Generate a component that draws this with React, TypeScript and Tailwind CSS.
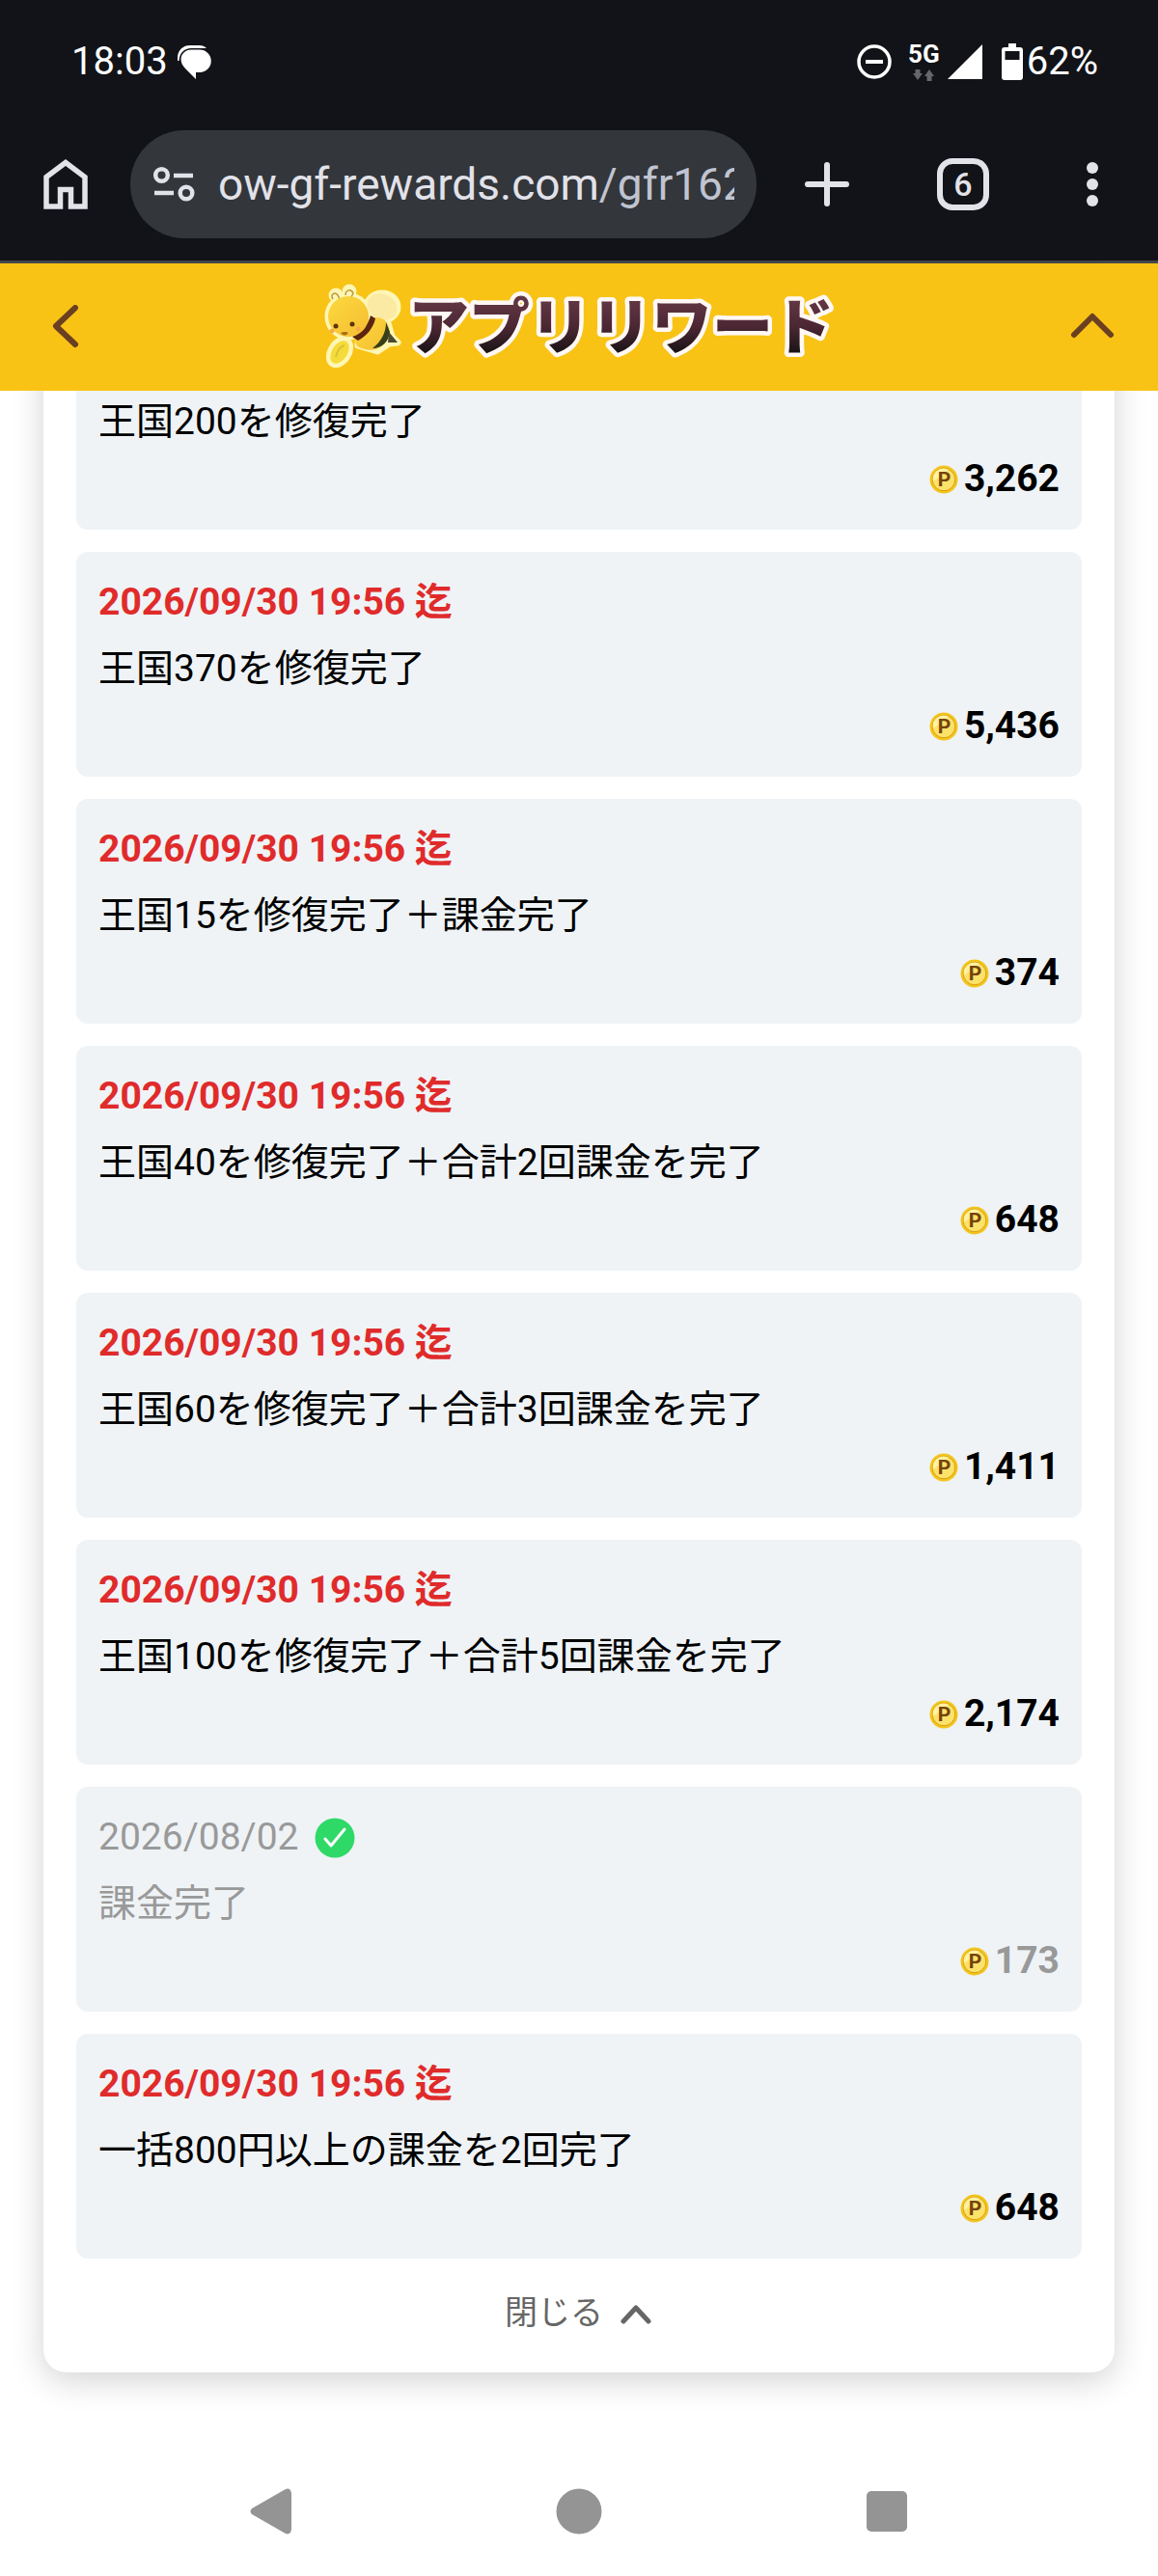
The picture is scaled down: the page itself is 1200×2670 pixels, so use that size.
import { ReactNode } from 'react';

type Reward = {
  date: string;
  title: string;
  points: string;
  done?: boolean;
};

const rewards: Reward[] = [
  { date: '2026/09/30 19:56 迄', title: '王国200を修復完了', points: '3,262' },
  { date: '2026/09/30 19:56 迄', title: '王国370を修復完了', points: '5,436' },
  { date: '2026/09/30 19:56 迄', title: '王国15を修復完了＋課金完了', points: '374' },
  { date: '2026/09/30 19:56 迄', title: '王国40を修復完了＋合計2回課金を完了', points: '648' },
  { date: '2026/09/30 19:56 迄', title: '王国60を修復完了＋合計3回課金を完了', points: '1,411' },
  { date: '2026/09/30 19:56 迄', title: '王国100を修復完了＋合計5回課金を完了', points: '2,174' },
  { date: '2026/08/02', title: '課金完了', points: '173', done: true },
  { date: '2026/09/30 19:56 迄', title: '一括800円以上の課金を2回完了', points: '648' },
];

function StatusBar() {
  return (
    <div className="flex h-32 items-center justify-between pl-[74px] pr-[62px] text-[40px] leading-none text-white">
      <div className="flex items-center gap-2.5">
        <span>18:03</span>
        <svg width="36" height="36" viewBox="0 0 36 36" fill="currentColor">
          <path d="M0 17C-1 8 4 1 13 1h9c4 0 6 1 8 3H14C7 4 2 9 1.500 17z" />
          <path d="M14 5.500h9a11.700 11.700 0 0 1 0 23.500h-4v7L8 25C-1 16 5 5.500 14 5.500z" />
        </svg>
      </div>
      <div className="flex items-center">
        <svg width="38" height="38" viewBox="0 0 38 38" fill="none" stroke="currentColor" strokeWidth="3.500">
          <circle cx="19" cy="19" r="16" />
          <path d="M10 19h18" strokeWidth="4" />
        </svg>
        <div className="ml-4 flex flex-col items-center gap-1">
          <span className="text-[26px] font-bold leading-6">5G</span>
          <svg width="24" height="12" viewBox="0 0 24 12" fill="#66676b">
            <path d="M3.500 0h5v4H11L6 11 1 4h2.500z" />
            <path d="M15.500 12h5V7H23l-5-7-5 7h2.500z" />
          </svg>
        </div>
        <svg className="ml-2" width="36" height="36" viewBox="0 0 36 36" fill="currentColor">
          <path d="M36 0v36H0z" />
        </svg>
        <svg className="ml-5" width="22" height="38" viewBox="0 0 22 38">
          <path d="M7 0h8v4h4a3 3 0 0 1 3 3v28a3 3 0 0 1-3 3H3a3 3 0 0 1-3-3V7a3 3 0 0 1 3-3h4z" fill="currentColor" />
          <path d="M3.500 8h15v9h-15z" fill="#111318" />
        </svg>
        <span className="ml-1">62%</span>
      </div>
    </div>
  );
}

function BrowserBar() {
  return (
    <div className="flex items-center border-b-[3px] border-[#44474c] pb-[23px] pl-11 pr-[51px] pt-[7px] text-[#e2e2e9]">
      <button type="button" aria-label="ホーム">
        <svg width="48" height="54" viewBox="0 0 48 54" fill="none" stroke="currentColor" strokeWidth="5.500">
          <path d="M4 19.500 24 4.500l20 15V50H29.500V32.500h-11V50H4z" />
        </svg>
      </button>
      <button
        type="button"
        className="ml-[43px] flex h-28 min-w-0 flex-1 items-center gap-6 rounded-full bg-[#33363b] pl-6 pr-[23px]"
      >
        <svg className="shrink-0" width="43" height="42" viewBox="0 0 43 42" fill="none" stroke="currentColor" strokeWidth="4.500">
          <circle cx="8.500" cy="11.500" r="6.300" />
          <path d="M21 12h20M1 30h20" />
          <circle cx="34" cy="30" r="6.300" />
        </svg>
        <span className="min-w-0 flex-1 overflow-hidden whitespace-nowrap text-left text-[46px] leading-[60px]">
          ow-gf-rewards.com<span className="text-[#c0c4d0]">/gfr162</span>
        </span>
      </button>
      <div className="ml-[49px] flex items-center gap-[90px]">
        <button type="button" aria-label="新しいタブ">
          <svg width="48" height="48" viewBox="0 0 48 48" fill="none" stroke="currentColor" strokeWidth="6" strokeLinecap="round">
            <path d="M24 4v40M4 24h40" />
          </svg>
        </button>
        <button
          type="button"
          className="flex size-[54px] items-center justify-center rounded-2xl border-[6px] border-[#e2e2e9] text-[34px] font-medium leading-none"
        >
          6
        </button>
        <button type="button" aria-label="メニュー">
          <svg width="34" height="48" viewBox="0 0 34 48" fill="currentColor">
            <circle cx="17" cy="7" r="6" />
            <circle cx="17" cy="24" r="6" />
            <circle cx="17" cy="41" r="6" />
          </svg>
        </button>
      </div>
    </div>
  );
}

function Logo() {
  return (
    <svg width="540" height="108" viewBox="-4 -8 540 108" role="img" aria-label="アプリリワード">
      <defs>
        <linearGradient id="logo-ink" x1="0" y1="0" x2="0" y2="1">
          <stop offset="0.2" stopColor="#663a46" />
          <stop offset="0.550" stopColor="#4c2734" />
          <stop offset="0.850" stopColor="#1a1416" />
        </linearGradient>
        <linearGradient id="bee-body" x1="0" y1="0" x2="1" y2="1">
          <stop offset="0" stopColor="#fcd93c" />
          <stop offset="1" stopColor="#f5bd33" />
        </linearGradient>
      </defs>

      {/* cream outline behind the bee */}
      <g fill="#fff6b4" stroke="#fff6b4" strokeWidth="7" strokeLinejoin="round">
        <circle cx="27" cy="35" r="21" />
        <ellipse cx="62" cy="25" rx="16" ry="14" />
        <path d="M38 52 54 34l14 8 4 14 6 6-9 1-12 8-20-6z" />
        <ellipse cx="18" cy="72" rx="9" ry="14" transform="rotate(32 18 72)" />
        <circle cx="14" cy="13" r="4" />
        <circle cx="28" cy="9" r="4" />
      </g>
      <path d="M11 17c-3-5 2-8 5-4l2 4M24 13c0-6 6-7 8-2l-2 4" fill="none" stroke="#b99b3c" strokeWidth="1.500" />
      <ellipse cx="62" cy="25" rx="16" ry="13" fill="#fbeaa4" transform="rotate(28 62 25)" />
      <path d="M32 56c6-12 16-21 26-20 10 2 14 12 10 20-4 12-16 18-32 10z" fill="url(#bee-body)" />
      <path d="M50 34c-2 9-9 18-19 22l6 4c9-5 16-13 18-23z" fill="#5b2510" />
      <path d="M66 41c0 11-5 20-14 27 10 0 17-7 18-17z" fill="#363f17" />
      <path d="m69 51 9 11-10 0z" fill="#4b4930" />
      <circle cx="27" cy="35" r="21" fill="url(#bee-body)" />
      <circle cx="14" cy="45" r="2.500" fill="#5d340b" />
      <circle cx="31" cy="43" r="2.500" fill="#5d340b" />
      <path d="M19 52q5-2 8 0-4 5-8 0z" fill="#a66c17" />
      <circle cx="10" cy="50" r="2.500" fill="#f8ac46" />
      <circle cx="37" cy="48" r="2.500" fill="#f8ac46" />
      <ellipse cx="18" cy="72" rx="8" ry="13" fill="#f5dc3a" transform="rotate(32 18 72)" />
      <path d="M14 77q2-10 9-12" fill="none" stroke="#dcc03a" strokeWidth="2" />

      <text
        x="89"
        y="68"
        fontSize="63"
        fontWeight="900"
        fill="url(#logo-ink)"
        stroke="#fff8f4"
        strokeWidth="9"
        strokeLinejoin="round"
        paintOrder="stroke"
        className="font-['Noto_Sans_CJK_JP',sans-serif]"
      >
        アプリリワード
      </text>
    </svg>
  );
}

function Header() {
  return (
    <header className="relative z-10 flex h-[132px] items-center justify-between bg-[#f8c314] px-[45px] text-[#6b3f22]">
      <button type="button" aria-label="戻る">
        <svg width="46" height="46" viewBox="0 0 46 46" fill="none" stroke="currentColor" strokeWidth="6" strokeLinecap="round" strokeLinejoin="round">
          <path d="M33 3 13 22l20 19" />
        </svg>
      </button>
      <Logo />
      <button type="button" aria-label="メニューを開く">
        <svg width="46" height="46" viewBox="0 0 46 46" fill="none" stroke="currentColor" strokeWidth="6" strokeLinecap="round" strokeLinejoin="round">
          <path d="m4 31 19-19 19 19" />
        </svg>
      </button>
    </header>
  );
}

function Coin() {
  return (
    <svg width="30" height="30" viewBox="0 0 30 30" aria-hidden="true">
      <circle cx="15" cy="15" r="14.500" fill="#f3c51d" />
      <circle cx="15" cy="15" r="11.800" fill="#fde269" stroke="#d79d10" strokeWidth="1" />
      <path d="M4 17A11 11 0 0 1 20 5z" fill="#fff3a0" />
      <text x="15.500" y="22" fontSize="21" fontWeight="700" textAnchor="middle" fill="#74430b">
        P
      </text>
    </svg>
  );
}

function RewardItem({ date, title, points, done }: Reward) {
  return (
    <li
      className={
        done
          ? 'rounded-xl bg-[#eff3f6] p-[23px] text-[#999999]'
          : 'rounded-xl bg-[#eff3f6] p-[23px] text-black'
      }
    >
      <div className="mb-2.5 flex items-center gap-4">
        <span className={done ? '' : 'font-bold text-[#e02b2b]'}>{date}</span>
        {done && (
          <svg width="42" height="42" viewBox="0 0 42 42" role="img" aria-label="完了">
            <circle cx="21" cy="21" r="20.500" fill="#2ed968" />
            <path d="m11 22 6 7 14-17" fill="none" stroke="white" strokeWidth="3" strokeLinecap="round" strokeLinejoin="round" />
          </svg>
        )}
      </div>
      <p>{title}</p>
      <div className="flex items-center justify-end gap-1.5 font-bold">
        <Coin />
        <span>{points}</span>
      </div>
    </li>
  );
}

function NavButton({ label, children }: { label: string; children: ReactNode }) {
  return (
    <button type="button" aria-label={label} className="flex justify-center">
      <svg width="48" height="48" viewBox="0 0 48 48" fill="currentColor">
        {children}
      </svg>
    </button>
  );
}

export default function App() {
  return (
    <div lang="ja" className="min-h-screen overflow-hidden bg-white font-[Roboto,'Noto_Sans_CJK_JP',sans-serif]">
      <div className="bg-[#111318]">
        <StatusBar />
        <BrowserBar />
      </div>
      <Header />

      {/* the list is scrolled, its first card sits partly under the header */}
      <main className="-mt-28 px-[45px] pb-[77px]">
        <section className="rounded-3xl bg-white px-[34px] pt-[23px] shadow-[0_8px_34px_rgba(0,0,0,0.18)]">
          <ul className="flex flex-col gap-[23px] text-[39px] leading-[59px]">
            {rewards.map((reward) => (
              <RewardItem key={reward.title} {...reward} />
            ))}
          </ul>
          <button
            type="button"
            className="flex h-[118px] w-full items-center justify-center gap-[18px] pb-1.5 text-[34px] text-[#666666]"
          >
            閉じる
            <svg width="34" height="34" viewBox="0 0 34 34" fill="none" stroke="currentColor" strokeWidth="5" strokeLinecap="round" strokeLinejoin="round">
              <path d="m3 26 13-14 13 14" />
            </svg>
          </button>
        </section>
      </main>

      <nav className="grid h-[134px] grid-cols-3 items-center px-[121px] text-[#949494]">
        <NavButton label="戻る">
          <path d="M4 21 38 1.500q6-3 7 4v37q-1 7-7 4L4 27q-3-3 0-6z" />
        </NavButton>
        <NavButton label="ホーム">
          <circle cx="24" cy="24" r="23.500" />
        </NavButton>
        <NavButton label="履歴">
          <rect x="3" y="3" width="42" height="42" rx="5" />
        </NavButton>
      </nav>
    </div>
  );
}
